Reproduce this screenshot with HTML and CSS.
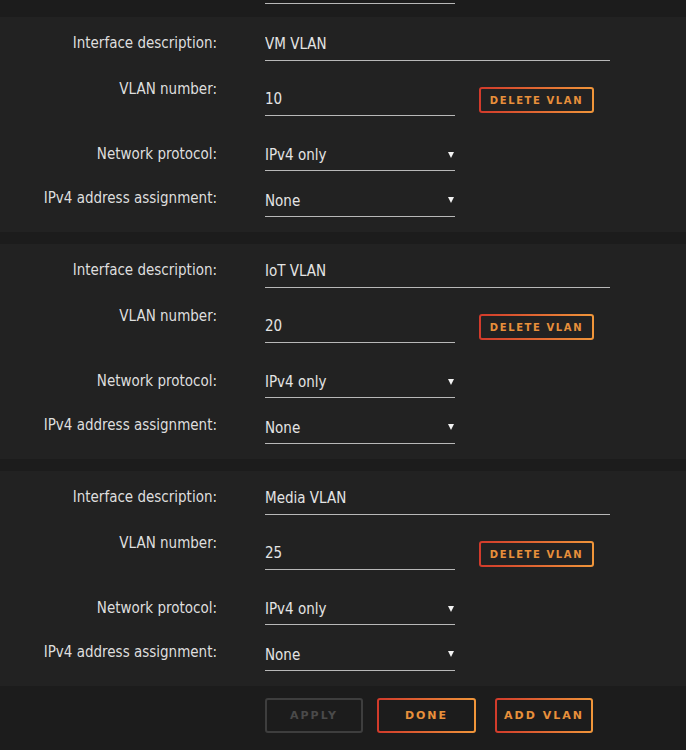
FILE: index.html
```html
<!DOCTYPE html>
<html lang="en">
<head>
    <meta charset="UTF-8">
    <meta name="viewport" content="width=device-width, initial-scale=1.0">
    <title>VLANs</title>
    <link rel="stylesheet" href="styles.css">
</head>
<body>
    <div class="stub"><div class="stub-line"></div></div>

    <div class="vlan">
        <div class="row row-desc">
            <label class="label">Interface description:</label>
            <input class="field wide" type="text" value="VM VLAN">
        </div>
        <div class="row row-num">
            <label class="label">VLAN number:</label>
            <input class="field" type="text" value="10">
            <button class="btn btn-small">Delete VLAN</button>
        </div>
        <div class="row row-proto">
            <label class="label">Network protocol:</label>
            <div class="select">
                <select class="field"><option>IPv4 only</option></select>
            </div>
        </div>
        <div class="row row-addr">
            <label class="label">IPv4 address assignment:</label>
            <div class="select">
                <select class="field"><option>None</option></select>
            </div>
        </div>
    </div>

    <div class="vlan">
        <div class="row row-desc">
            <label class="label">Interface description:</label>
            <input class="field wide" type="text" value="IoT VLAN">
        </div>
        <div class="row row-num">
            <label class="label">VLAN number:</label>
            <input class="field" type="text" value="20">
            <button class="btn btn-small">Delete VLAN</button>
        </div>
        <div class="row row-proto">
            <label class="label">Network protocol:</label>
            <div class="select">
                <select class="field"><option>IPv4 only</option></select>
            </div>
        </div>
        <div class="row row-addr">
            <label class="label">IPv4 address assignment:</label>
            <div class="select">
                <select class="field"><option>None</option></select>
            </div>
        </div>
    </div>

    <div class="vlan">
        <div class="row row-desc">
            <label class="label">Interface description:</label>
            <input class="field wide" type="text" value="Media VLAN">
        </div>
        <div class="row row-num">
            <label class="label">VLAN number:</label>
            <input class="field" type="text" value="25">
            <button class="btn btn-small">Delete VLAN</button>
        </div>
        <div class="row row-proto">
            <label class="label">Network protocol:</label>
            <div class="select">
                <select class="field"><option>IPv4 only</option></select>
            </div>
        </div>
        <div class="row row-addr">
            <label class="label">IPv4 address assignment:</label>
            <div class="select">
                <select class="field"><option>None</option></select>
            </div>
        </div>
    </div>

    <div class="footer">
        <button class="btn btn-big btn-disabled" disabled>Apply</button>
        <button class="btn btn-big btn-done">Done</button>
        <button class="btn btn-big btn-add">Add VLAN</button>
    </div>
</body>
</html>
```

FILE: styles.css
```css
body {
    margin: 0;
    background-color: #1c1c1c;
    font-family: "DejaVu Sans Condensed", "DejaVu Sans", sans-serif;
    font-size: 15px;
    color: #dedede;
}
.stub {
    height: 17px;
    padding-top: 3px;
    box-sizing: border-box;
}
.stub-line {
    margin-left: 265px;
    width: 190px;
    height: 1px;
    background-color: #b8b8b8;
}
.vlan {
    background-color: #222222;
    height: 215px;
    padding-top: 10px;
    box-sizing: border-box;
}
.vlan + .vlan {
    margin-top: 12px;
}
.row {
    display: flex;
    align-items: flex-start;
}
.label {
    width: 217px;
    text-align: right;
    line-height: 20px;
    flex-shrink: 0;
}
.field {
    display: block;
    margin: 0 0 0 48px;
    width: 190px;
    padding: 0;
    border: none;
    border-bottom: 1px solid #b8b8b8;
    border-radius: 0;
    background: transparent;
    color: #e4e4e4;
    font-family: inherit;
    font-size: 15px;
    outline: none;
    box-sizing: border-box;
    -webkit-appearance: none;
    appearance: none;
}
.field.wide {
    width: 345px;
}
.row-desc .label {
    margin-top: 6px;
}
.row-desc .field {
    height: 34px;
}
.row-num {
    margin-top: 18px;
}
.row-num .field {
    margin-top: 4px;
    height: 33px;
}
.row-proto {
    margin-top: 24px;
}
.row-proto .label {
    margin-top: 4px;
}
.row-proto .field {
    height: 31px;
}
.row-addr {
    margin-top: 14px;
}
.row-addr .label {
    margin-top: 3px;
}
.row-addr .field {
    height: 32px;
}
.select {
    position: relative;
}
.select::after {
    content: "";
    position: absolute;
    right: 1px;
    top: 50%;
    margin-top: -4px;
    border-left: 3.5px solid transparent;
    border-right: 3.5px solid transparent;
    border-top: 6px solid #f2f2f2;
}
.btn {
    border: 2px solid transparent;
    border-radius: 3px;
    background: linear-gradient(#222222, #222222) padding-box,
                linear-gradient(90deg, #d13a2b, #f0963a) border-box;
    color: #e8903b;
    font-family: "DejaVu Sans", sans-serif;
    font-weight: bold;
    text-transform: uppercase;
    padding: 0;
    cursor: pointer;
    box-sizing: border-box;
}
.btn-small {
    margin: 8px 0 0 24px;
    width: 115px;
    height: 26px;
    font-size: 10px;
    letter-spacing: 1.6px;
}
.footer {
    padding: 12px 0 0 265px;
    display: flex;
    height: 63px;
}
.btn-big {
    width: 98px;
    height: 35px;
    font-size: 11px;
    letter-spacing: 2px;
    background: linear-gradient(#1c1c1c, #1c1c1c) padding-box,
                linear-gradient(90deg, #d13a2b, #f0963a) border-box;
}
.btn-disabled {
    background: #1c1c1c;
    border: 2px solid #3e3e3e;
    color: #4a4a4a;
    cursor: default;
}
.btn-done {
    margin-left: 14px;
    width: 99px;
}
.btn-add {
    margin-left: 19px;
}
```
